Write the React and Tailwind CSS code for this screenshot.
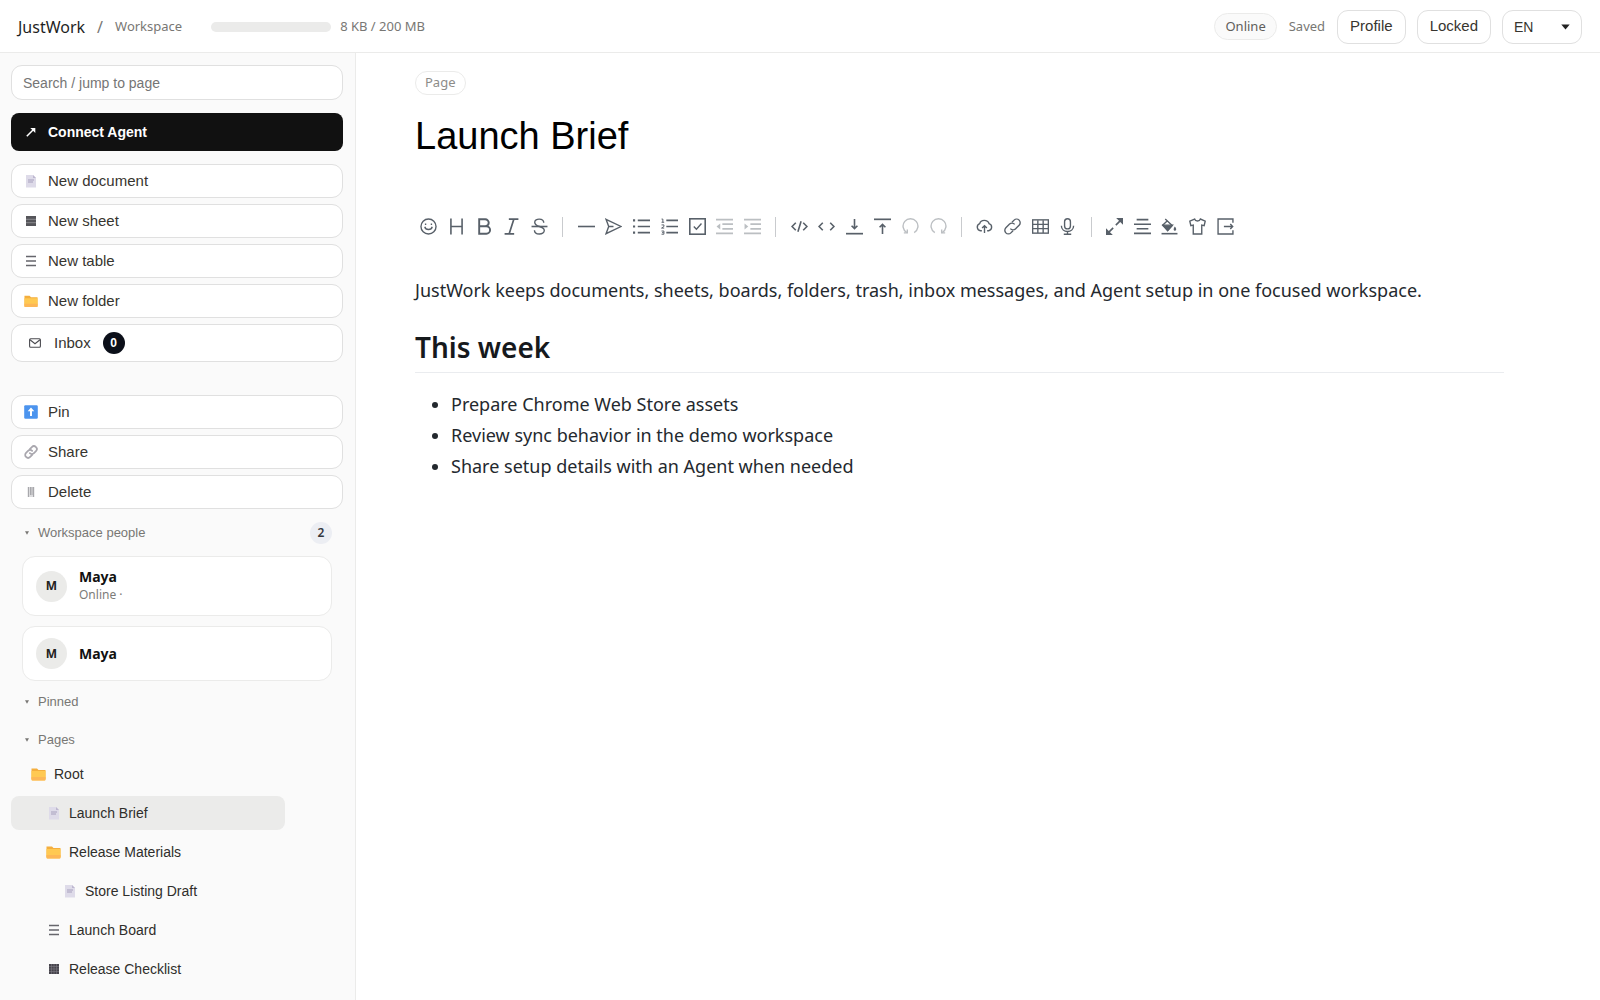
import React from "react";

const ARIAL = "font-['Liberation_Sans',Arial,sans-serif]";

/* ---------- Small coloured glyphs used in the sidebar ---------- */

function DocIcon() {
  return (
    <svg width="14" height="14" viewBox="0 0 14 14" aria-hidden="true">
      <path d="M2 1h7l3 3v9.5H2z" fill="#dedbe9" />
      <path d="M9 1l3 3H9z" fill="#bdb7d0" />
      <path d="M4 6h6M4 8h5" stroke="#a7a0bd" strokeWidth="1" />
    </svg>
  );
}

function SheetIcon() {
  return (
    <svg width="14" height="14" viewBox="0 0 14 14" aria-hidden="true">
      <rect x="2" y="2" width="10" height="10" fill="#46444c" />
      <path d="M2 4.500h10M2 7h10M2 9.500h10M4.500 2v10M7 2v10M9.500 2v10" stroke="#85838b" strokeWidth=".5" />
    </svg>
  );
}

function SheetBarsIcon() {
  return (
    <svg width="14" height="14" viewBox="0 0 14 14" aria-hidden="true">
      <rect x="2" y="2" width="10" height="10" fill="#55555a" />
      <path d="M2 5.300h10M2 8.700h10" stroke="#98989c" strokeWidth=".8" />
    </svg>
  );
}

function RowsIcon() {
  return (
    <svg width="14" height="14" viewBox="0 0 14 14" aria-hidden="true">
      <path d="M2 2.500h10M2 7h10M2 11.500h10" stroke="#66666c" strokeWidth="1.300" />
    </svg>
  );
}

function FolderIcon() {
  return (
    <svg width="15" height="14" viewBox="0 0 15 14" aria-hidden="true">
      <path d="M.5 1.500h5.500l1.500 1.600h7V12H.5z" fill="#f4ae3d" />
      <path d="M.5 4h14v8.500a1 1 0 0 1-1 1h-12a1 1 0 0 1-1-1z" fill="#ffc952" />
      <path d="M.5 10h14v2.500a1 1 0 0 1-1 1h-12a1 1 0 0 1-1-1z" fill="#fdb757" />
    </svg>
  );
}

function MailIcon() {
  return (
    <svg width="14" height="14" viewBox="0 0 14 14" fill="none" stroke="#4b4b50" strokeWidth="1.100" aria-hidden="true">
      <rect x="1.600" y="2.800" width="10.800" height="8.400" rx="1" />
      <path d="M2 3.800l5 4 5-4" />
    </svg>
  );
}

function PinIcon() {
  return (
    <svg width="14" height="14" viewBox="0 0 14 14" aria-hidden="true">
      <rect x=".2" y=".2" width="13.600" height="13.600" rx="1.200" fill="#4c94ee" />
      <path d="M7 2.500l3.300 3.700H8V11H6V6.200H3.700z" fill="#fff" />
    </svg>
  );
}

function ChainIcon() {
  return (
    <svg width="14" height="14" viewBox="0 0 24 24" fill="none" stroke="#a9a7ae" strokeWidth="3" strokeLinecap="round" aria-hidden="true">
      <path d="M10 14a5 5 0 0 0 7.100 0l3.400-3.400a5 5 0 0 0-7.100-7.100L10 7" />
      <path d="M14 10a5 5 0 0 0-7.100 0l-3.400 3.400a5 5 0 0 0 7.100 7.100L14 17" />
    </svg>
  );
}

function BinIcon() {
  return (
    <svg width="14" height="14" viewBox="0 0 14 14" aria-hidden="true">
      <path d="M3.500 2h7v10h-7z" fill="#dcdcde" />
      <path d="M4.500 2v10M6.500 2v8M8 2v8M9.500 2v10" stroke="#a8a8ac" strokeWidth="1" />
    </svg>
  );
}

function ArrowIcon() {
  return (
    <svg width="14" height="14" viewBox="0 0 14 14" aria-hidden="true">
      <path d="M2.800 11.200L9 5" stroke="#fff" strokeWidth="1.500" />
      <path d="M11.300 2.900v5L6.300 2.900z" fill="#fff" />
    </svg>
  );
}

/* ---------- Editor toolbar ---------- */

const TOOL_GROUPS = [
  [
    ["Emoji", <><circle cx="16" cy="16" r="14.200" /><path d="M9 16.500c1.500 7 12.500 7 14 0" /><path d="M10.500 10.500v2.500M21.500 10.500v2.500" /></>],
    ["Headings", <path d="M5.500 1v30M26.500 1v30M5.500 16h21" strokeWidth="3" />],
    ["Bold", <path d="M6 2.500h11.500a6.500 6.500 0 0 1 0 13H6zM6 15.500h13.500a7 7 0 0 1 0 14H6z" strokeWidth="3.600" />],
    ["Italic", <path d="M11 2h18M3 30h18M20.500 2L11.500 30" strokeWidth="3.200" />],
    ["Strike", <><path d="M24 9c0-9-17-9-17-1 0 4 4 6.500 9 8 5 1.400 9 3.500 9 7.500 0 9-18.500 9-18.500-.500" /><path d="M1 16h30" strokeWidth="3" /></>],
  ],
  [
    ["Line", <path d="M0 16h32" strokeWidth="3" />],
    ["Quote", <path d="M2 2.500L30 16 2 29.500 7 16zM7 16h9" />],
    ["List", <><path d="M9 4.500h23M9 16h23M9 27.500h23" strokeWidth="3" /><path d="M0 4.500h4M0 16h4M0 27.500h4" strokeWidth="4" /></>],
    ["Ordered list", <><path d="M10 4.500h22M10 16h22M10 27.500h22" strokeWidth="3" /><path d="M1 2h2.500v6M1 8h5M1 13h4.500v3L1 19h5M1 24.500h4.500v6H1M2 27.500h3" strokeWidth="1.800" /></>],
    ["Task list", <><rect x="1.500" y="1.500" width="29" height="29" strokeWidth="3" /><path d="M9 16l5 5 9.500-10.500" /></>],
    ["Outdent", <><path d="M0 3h32M12 11.500h20M12 20.500h20M0 29h32" strokeWidth="3" /><path d="M8 10.500v11L1 16z" fill="currentColor" stroke="none" /></>, true],
    ["Indent", <><path d="M0 3h32M12 11.500h20M12 20.500h20M0 29h32" strokeWidth="3" /><path d="M1 10.500v11L8 16z" fill="currentColor" stroke="none" /></>, true],
  ],
  [
    ["Code block", <path d="M9 9l-7 7 7 7M23 9l7 7-7 7M19 6l-6 20" strokeWidth="3" />],
    ["Inline code", <path d="M9 9l-7 7 7 7M23 9l7 7-7 7" strokeWidth="3" />],
    ["Insert after", <><path d="M0 29.500h32" strokeWidth="3.200" /><path d="M16 2v18M10.500 14.500L16 20l5.500-5.500" strokeWidth="3" /></>],
    ["Insert before", <><path d="M0 2.500h32" strokeWidth="3.200" /><path d="M16 30V12M10.500 17.500L16 12l5.500 5.500" strokeWidth="3" /></>],
    ["Undo", <><path d="M9 27.500A14 14 0 1 1 23 27.500" /><path d="M3.500 28H10v-6.500" /></>, true],
    ["Redo", <><path d="M23 27.500A14 14 0 1 0 9 27.500" /><path d="M28.500 28H22v-6.500" /></>, true],
  ],
  [
    ["Upload", <><path d="M11 24H8.500a7 7 0 0 1-1.500-13.500C9 2.500 22 2.500 24.500 10.500A7 7 0 0 1 24 24h-3" /><path d="M16 28V15M11.500 19l4.500-4.500 4.500 4.500" /></>],
    ["Link", <><path d="M12 20a6.500 6.500 0 0 0 9.500.500l7-7a6.400 6.400 0 0 0-9.500-9.500L15 8" /><path d="M20 12a6.500 6.500 0 0 0-9.500-.500l-7 7a6.400 6.400 0 0 0 9.500 9.500L17 24" /></>],
    ["Table", <><rect x="1.200" y="3.500" width="29.600" height="25" /><path d="M1 12h30M1 20h30M11 4v24M21 4v24" /></>],
    ["Record", <><rect x="10.500" y="1.500" width="11" height="19" rx="5.500" /><path d="M4.500 14.500c0 14.500 23 14.500 23 0M16 25v5M9 30.500h14" /></>],
  ],
  [
    ["Fullscreen", <><path d="M4 28l9.500-9.500M18.500 13.500L28 4" strokeWidth="3" /><path d="M22 1h9v9zM1 22v9h9z" fill="currentColor" /></>],
    ["Outline", <path d="M5 3h22M0 11.700h32M5 20.300h22M0 29h32" strokeWidth="3" />],
    ["Code theme", <><path d="M1 29.500h30" strokeWidth="3" /><path d="M8 2l13 12-8.500 9L3 13.500 11 6" /><path d="M4 13.500h17.500L12.500 24z" fill="currentColor" /><path d="M26 16c5 6 1.500 8 0 8s-4-2 0-8z" fill="currentColor" stroke="none" /></>],
    ["Content theme", <path d="M10.500 2L1.500 6l2 8.500L8 13.500V30h16V13.500l4.500 1 2-8.500-9-4c-1.500 5-9.500 5-11 0z" />],
    ["Export", <><path d="M30 9V2H2v28h28v-7" /><path d="M13 16h17M25 11.500l4.500 4.500-4.500 4.500" /></>],
  ],
];

function Toolbar() {
  return (
    <div role="toolbar" aria-label="Formatting" className="ml-px mt-[51px] flex h-[35px] max-w-[822px] items-center justify-between text-[#586069]">
      {TOOL_GROUPS.map((group, g) => (
        <React.Fragment key={g}>
          {g > 0 && (
            <span className="flex w-4 shrink-0 justify-center">
              <span className="h-5 w-px bg-[#c9cbce]" />
            </span>
          )}
          {group.map(([label, art, disabled]) => (
            <button
              key={label}
              type="button"
              aria-label={label}
              disabled={disabled}
              className="flex h-[25px] w-[25px] shrink-0 items-center justify-center disabled:opacity-40"
            >
              <svg width="17" height="17" viewBox="0 0 32 32" fill="none" stroke="currentColor" strokeWidth="2.600">
                {art}
              </svg>
            </button>
          ))}
        </React.Fragment>
      ))}
    </div>
  );
}

/* ---------- Sidebar ---------- */

function SideButton({ icon, children }) {
  return (
    <button
      type="button"
      className={`flex h-[34px] w-full items-center gap-[10px] rounded-[11px] border border-[#e0e0e0] bg-white pl-3 text-left text-[15px] text-[#37352f] ${ARIAL}`}
    >
      <span className="flex w-[14px] justify-center">{icon}</span>
      {children}
    </button>
  );
}

function SectionHead({ children, badge, className }) {
  return (
    <div className={`flex h-[26px] items-center justify-between px-[11px] ${className}`}>
      <button type="button" className={`flex items-center gap-[9px] pl-[3px] text-[13px] text-[#787774] ${ARIAL}`}>
        <svg width="4" height="4" viewBox="0 0 4 4" aria-hidden="true">
          <path d="M0 .2h4L2 3.800z" fill="#787774" />
        </svg>
        {children}
      </button>
      {badge && (
        <span className="flex h-[22px] w-[22px] items-center justify-center rounded-full bg-[#eceef3] text-xs font-semibold text-[#33363d]">
          {badge}
        </span>
      )}
    </div>
  );
}

function Person({ status, className }) {
  return (
    <li className={`flex items-center gap-3 rounded-[13px] border border-[#ebebea] bg-white pl-[13px] ${className}`}>
      <span className="flex h-[31px] w-[31px] items-center justify-center rounded-full bg-[#ebebe9] text-xs font-bold text-[#222]">
        M
      </span>
      <span className="flex flex-col pb-px">
        <strong className="text-sm leading-[19px] font-bold text-[#111]">Maya</strong>
        {status && <span className="text-xs leading-[18px] text-[#7d7c79]">{status}</span>}
      </span>
    </li>
  );
}

const PAGES = [
  ["Root", <FolderIcon />, "pl-5"],
  ["Launch Brief", <DocIcon />, "pl-[35px]", true],
  ["Release Materials", <FolderIcon />, "pl-[35px]"],
  ["Store Listing Draft", <DocIcon />, "pl-[51px]"],
  ["Launch Board", <RowsIcon />, "pl-[35px]"],
  ["Release Checklist", <SheetIcon />, "pl-[35px]"],
];

function Sidebar() {
  return (
    <aside className="w-[356px] shrink-0 border-r border-[#ebebea] bg-[#fafafa] pt-3 pr-3 pb-3 pl-[11px]">
      <input
        type="search"
        aria-label="Search or jump to page"
        placeholder="Search / jump to page"
        className={`block h-[35px] w-full rounded-[11px] border border-[#e0e0e0] bg-white px-[11px] text-sm text-[#37352f] placeholder:text-[#757575] ${ARIAL}`}
      />
      <button
        type="button"
        className={`mt-[13px] flex h-[38px] w-full items-center gap-[10px] rounded-lg bg-[#111] pl-[13px] text-sm font-bold text-white ${ARIAL}`}
      >
        <ArrowIcon />
        Connect Agent
      </button>

      <div className="mt-[13px] flex flex-col gap-[6px]">
        <SideButton icon={<DocIcon />}>New document</SideButton>
        <SideButton icon={<SheetBarsIcon />}>New sheet</SideButton>
        <SideButton icon={<RowsIcon />}>New table</SideButton>
        <SideButton icon={<FolderIcon />}>New folder</SideButton>
        <button
          type="button"
          className={`flex h-[38px] w-full items-center rounded-[11px] border border-[#e0e0e0] bg-white pl-4 text-[15px] text-[#37352f] ${ARIAL}`}
        >
          <MailIcon />
          <span className="ml-3">Inbox</span>
          <span className="ml-3 flex h-[22px] w-[22px] items-center justify-center rounded-full bg-[#0b0f19] text-xs font-bold text-white">
            0
          </span>
        </button>
      </div>

      <div className="mt-[33px] flex flex-col gap-[6px]">
        <SideButton icon={<PinIcon />}>Pin</SideButton>
        <SideButton icon={<ChainIcon />}>Share</SideButton>
        <SideButton icon={<BinIcon />}>Delete</SideButton>
      </div>

      <SectionHead badge="2" className="mt-[11px]">Workspace people</SectionHead>
      <ul className="mx-[11px] mt-[10px] flex flex-col gap-[10px]">
        <Person status="Online ·" className="h-[60px]" />
        <Person className="h-[55px]" />
      </ul>
      <SectionHead className="mt-2">Pinned</SectionHead>
      <SectionHead className="mt-3">Pages</SectionHead>

      <nav aria-label="Pages" className="mt-1 mr-[58px] flex flex-col gap-[5px]">
        {PAGES.map(([name, icon, indent, active]) => (
          <a
            key={name}
            href="#page"
            aria-current={active ? "page" : undefined}
            className={`flex h-[34px] items-center gap-2 rounded-lg text-sm text-[#2f2e2b] ${ARIAL} ${indent} ${active ? "bg-[#ebebea]" : ""}`}
          >
            <span className="flex w-[15px] justify-center">{icon}</span>
            {name}
          </a>
        ))}
      </nav>
    </aside>
  );
}

/* ---------- Header ---------- */

function Header() {
  return (
    <header className="flex h-[53px] items-center justify-between border-b border-[#ebebea] bg-white px-[18px] pt-px">
      <div className="flex items-center">
        <span className="text-base text-[#1f1f1f]">JustWork</span>
        <span className="mx-3 text-base text-[#787774]">/</span>
        <span className="text-[13px] text-[#787774]">Workspace</span>
        <div role="progressbar" aria-label="Storage used" aria-valuenow={0} className="mr-[9px] ml-[29px] h-[10px] w-[120px] rounded-full bg-[#ebebea]" />
        <span className="text-[13px] text-[#787774]">8 KB / 200 MB</span>
      </div>
      <div className="flex items-center">
        <span className="flex h-[27px] items-center rounded-full border border-[#ebebea] bg-[#fafafa] px-[10px] text-[13px] text-[#5f5e5b]">Online</span>
        <span className="mx-3 text-[13px] text-[#787774]">Saved</span>
        <button type="button" className={`h-[34px] rounded-[11px] border border-[#e0e0e0] bg-white px-3 text-[15px] text-[#37352f] ${ARIAL}`}>Profile</button>
        <button type="button" className={`ml-[11px] h-[34px] rounded-[11px] border border-[#e0e0e0] bg-white px-3 text-[15px] text-[#37352f] ${ARIAL}`}>Locked</button>
        <div className="relative ml-[11px]">
          <select aria-label="Language" defaultValue="EN" className={`h-[34px] w-[80px] appearance-none rounded-[11px] border border-[#e0e0e0] bg-white pl-[11px] text-sm text-[#37352f] ${ARIAL}`}>
            <option>EN</option>
          </select>
          <svg width="9" height="6" viewBox="0 0 9 6" aria-hidden="true" className="pointer-events-none absolute top-[14px] right-3">
            <path d="M.3 .5h8.400L4.500 5.500z" fill="#222" />
          </svg>
        </div>
      </div>
    </header>
  );
}

export default function App() {
  return (
    <div className="flex min-h-screen flex-col bg-white font-['Noto_Sans','Segoe_UI',sans-serif]">
      <Header />
      <div className="flex grow">
        <Sidebar />
        <main className="min-w-0 grow pt-[18px] pr-24 pl-[59px]">
          <span className="flex h-6 w-fit items-center rounded-full border border-[#ebebea] px-[9px] text-[13px] text-[#8d8c89]">Page</span>
          <h1 className={`mt-[19px] text-[38px] leading-[44px] text-black ${ARIAL}`}>Launch Brief</h1>
          <Toolbar />
          <article className="text-lg text-[#24292e]">
            <p className="mt-[31px] leading-[31px]">
              JustWork keeps documents, sheets, boards, folders, trash, inbox messages, and Agent setup in one focused workspace.
            </p>
            <h2 className="mt-6 border-b border-[#eaecef] pb-[7px] text-[28px] leading-[35px] font-semibold text-[#16191d]">This week</h2>
            <ul className="mt-4 list-disc pl-9 leading-[31px]">
              <li>Prepare Chrome Web Store assets</li>
              <li>Review sync behavior in the demo workspace</li>
              <li>Share setup details with an Agent when needed</li>
            </ul>
          </article>
        </main>
      </div>
    </div>
  );
}
